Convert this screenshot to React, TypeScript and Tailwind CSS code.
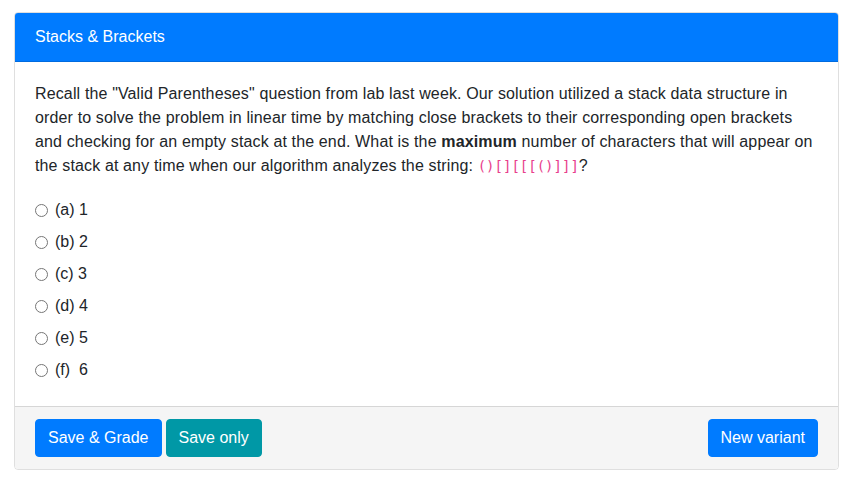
import React from 'react';

const options = ['(a) 1', '(b) 2', '(c) 3', '(d) 4', '(e) 5', '(f)  6'];

export default function App() {
    return (
        <div className="min-h-screen bg-white pl-[14px] pt-[12px] text-[#212529]" style={{ fontFamily: '"Liberation Sans", Arial, sans-serif' }}>
            <div className="w-[825px] rounded border border-black/[.125] overflow-hidden">
                {/* Header */}
                <div className="bg-[#007bff] px-5 py-3 text-base leading-6 text-white border-b border-black/[.125]">
                    Stacks &amp; Brackets
                </div>

                {/* Body */}
                <div className="p-5 text-base leading-6">
                    <p className="mb-4 whitespace-nowrap tracking-[0.14px]">
                        Recall the "Valid Parentheses" question from lab last week. Our solution utilized a stack data structure in<br />
                        order to solve the problem in linear time by matching close brackets to their corresponding open brackets<br />
                        and checking for an empty stack at the end. What is the <b className="font-bold">maximum</b> number of characters that will appear on<br />
                        the stack at any time when our algorithm analyzes the string:{' '}
                        <code className="text-[14px] tracking-normal text-[#e83e8c]" style={{ fontFamily: '"DejaVu Sans Mono", monospace' }}>()[][[[()]]]</code>?
                    </p>
                    <div className="flex flex-col gap-2 py-1">
                        {options.map((o) => (
                            <label key={o} className="flex items-center h-6">
                                <input type="radio" name="ans" className="m-0 mr-[7px] w-[13px] h-[13px]" />
                                <span className="whitespace-pre">{o}</span>
                            </label>
                        ))}
                    </div>
                </div>

                {/* Footer */}
                <div className="flex items-center bg-[#f5f5f5] px-5 py-3 border-t border-black/[.125]">
                    <button className="rounded border border-[#007bff] bg-[#007bff] px-3 py-1.5 text-base leading-6 text-white">
                        Save &amp; Grade
                    </button>
                    <button className="ml-1 rounded border border-[#0098a6] bg-[#0098a6] px-3 py-1.5 text-base leading-6 text-white">
                        Save only
                    </button>
                    <button className="ml-auto rounded border border-[#007bff] bg-[#007bff] px-3 py-1.5 text-base leading-6 text-white">
                        New variant
                    </button>
                </div>
            </div>
        </div>
    );
}
